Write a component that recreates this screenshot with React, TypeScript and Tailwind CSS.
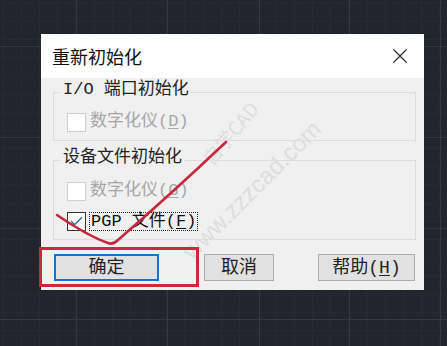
import { Check } from "lucide-react";

const bodyFont = "font-['Liberation_Mono','Noto_Sans_CJK_SC',monospace]";

function GridBackdrop() {
  const minor = [];
  for (let i = -5; i < 30; i++) minor.push(i * 18.2 + 3);
  const major = [-15, 76, 167, 259, 349, 440];
  const majorY = [-45, 46, 137, 228, 319, 410];
  return (
    <svg className="absolute inset-0" width="447" height="346">
      {minor.map((v) => (
        <g key={v} stroke="#262c35" strokeWidth="1">
          <line x1={v} y1="0" x2={v} y2="346" />
          <line x1="0" y1={v} x2="447" y2={v} />
        </g>
      ))}
      {major.map((x) => (
        <line key={"x" + x} x1={x + 0.5} y1="0" x2={x + 0.5} y2="346" stroke="#323945" strokeWidth="1" />
      ))}
      {majorY.map((y) => (
        <line key={"y" + y} x1="0" y1={y + 0.5} x2="447" y2={y + 0.5} stroke="#323945" strokeWidth="1" />
      ))}
    </svg>
  );
}

function Box({ checked }: { checked?: boolean }) {
  return (
    <span
      className={`w-[19px] h-[19px] bg-white border flex items-center justify-center shrink-0 ${
        checked ? "border-[#333333]" : "border-[#cfcfcf]"
      }`}
    >
      {checked && <Check size={15} strokeWidth={2} className="text-[#1f5fa6]" />}
    </span>
  );
}

function Group({ title, children, className }: { title: string; children: React.ReactNode; className?: string }) {
  return (
    <div className={`relative border border-[#dcdcdc] pl-[13px] ${className ?? ""}`}>
      <span className={`absolute left-[7px] top-[-13px] px-[2px] bg-[#f0f0f0] text-[17px] leading-[20px] text-[#222] ${bodyFont}`}>
        {title}
      </span>
      {children}
    </div>
  );
}

export default function App() {
  return (
    <div className="relative w-[447px] h-[346px] overflow-hidden bg-[#20262e] pl-[41px] pt-[34px]">
      <GridBackdrop />

      <div className="relative w-[383px] h-[256px] flex flex-col">
        {/* title bar */}
        <div className="h-[44px] bg-white flex items-center justify-between pl-[11px] pr-[17px]">
          <span className="text-[18px] leading-[24px] text-[#111] font-['Noto_Sans_CJK_SC',sans-serif]">重新初始化</span>
          <svg width="14" height="14" viewBox="0 0 14 14">
            <path d="M0.5 0.5 L13.5 13.5 M13.5 0.5 L0.5 13.5" stroke="#222" strokeWidth="1.1" />
          </svg>
        </div>

        {/* body */}
        <div className="relative flex-1 bg-[#f0f0f0] pt-[14px] pl-[12px] pr-[8px] overflow-hidden">
          <Group title="I/O 端口初始化" className="pt-[19px] pb-[8px]">
            <div className="flex items-center gap-[4px]">
              <Box />
              <span className={`text-[17px] leading-[20px] text-[#a6a6a6] ${bodyFont}`}>
                数字化仪(<span className="underline underline-offset-2">D</span>)
              </span>
            </div>
          </Group>

          <Group title="设备文件初始化" className="mt-[19px] pt-[20px] pb-[8px] flex flex-col gap-[11px]">
            <div className="flex items-center gap-[4px]">
              <Box />
              <span className={`text-[17px] leading-[20px] text-[#a6a6a6] ${bodyFont}`}>
                数字化仪(<span className="underline underline-offset-2">G</span>)
              </span>
            </div>
            <div className="flex items-center gap-[3px]">
              <Box checked />
              <span className={`border border-dotted border-[#222] px-[1px] text-[17px] leading-[17px] text-[#111] ${bodyFont}`}>
                PGP 文件(<span className="underline underline-offset-2">F</span>)
              </span>
            </div>
          </Group>

          <div className={`flex mt-[14px] pl-[1px] text-[18px] text-[#222] ${bodyFont}`}>
            <button className="w-[105px] h-[27px] bg-[#e1e1e1] border-2 border-[#1a72c8] leading-[22px]">确定</button>
            <button className="ml-[45px] w-[70px] h-[27px] bg-[#e1e1e1] border border-[#adadad] leading-[24px]">取消</button>
            <button className="ml-[44px] w-[97px] h-[27px] bg-[#e1e1e1] border border-[#adadad] leading-[24px]">
              帮助(<span className="underline underline-offset-2">H</span>)
            </button>
          </div>
        </div>
      </div>

      {/* watermark */}
      <span className="absolute left-[152px] top-[178px] w-[200px] text-center text-[24px] leading-[24px] text-[#dedede] font-['Liberation_Sans',sans-serif] -rotate-45 pointer-events-none">
        www.zzzcad.com
      </span>
      <span className="absolute left-[180px] top-[123px] w-[100px] text-center text-[19px] leading-[20px] text-[#dedede] font-['Noto_Sans_CJK_SC',sans-serif] -rotate-[50deg] pointer-events-none">
        自学CAD
      </span>

      {/* red annotation */}
      <svg className="absolute inset-0 pointer-events-none" width="447" height="346">
        <rect x="40.5" y="248.5" width="157" height="37" fill="none" stroke="#cc2a3b" strokeWidth="3" />
        <path
          d="M57 215 Q 88 236 108 243 Q 113 245 118 240 Q 170 195 226 142"
          fill="none"
          stroke="#c8283c"
          strokeWidth="2.6"
          strokeLinecap="round"
        />
      </svg>
    </div>
  );
}
